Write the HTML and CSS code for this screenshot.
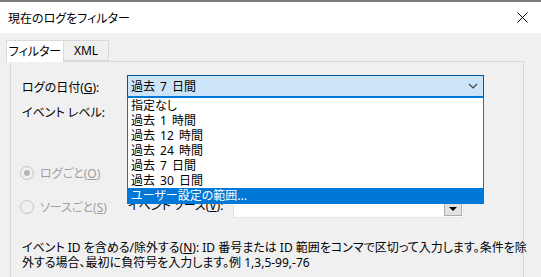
FILE: index.html
```html
<!DOCTYPE html>
<html lang="ja">
<head>
  <meta charset="UTF-8">
  <title>現在のログをフィルター</title>
  <link rel="stylesheet" href="styles.css">
</head>
<body>
  <div class="window">
    <div class="titlebar">
      <span class="title">現在のログをフィルター</span>
      <svg class="close" width="11" height="11" viewBox="0 0 11 11">
        <path d="M0.5 0.5 L10.5 10.5 M10.5 0.5 L0.5 10.5" stroke="#000" stroke-width="1" fill="none"/>
      </svg>
    </div>

    <div class="dialog">
      <div class="tabs">
        <div class="tab active">フィルター</div>
        <div class="tab">XML</div>
      </div>

      <div class="panel">
        <div class="row">
          <span class="label">ログの日付(<u>G</u>):</span>
          <div class="combo-wrap">
            <div class="combo open">
              <span>過去 7 日間</span>
              <svg width="10" height="6" viewBox="0 0 10 6">
                <path d="M1 1 L5 5 L9 1" stroke="#444" stroke-width="1.2" fill="none"/>
              </svg>
            </div>
            <ul class="dropdown">
              <li>指定なし</li>
              <li>過去 1 時間</li>
              <li>過去 12 時間</li>
              <li>過去 24 時間</li>
              <li>過去 7 日間</li>
              <li>過去 30 日間</li>
              <li class="selected">ユーザー設定の範囲...</li>
            </ul>
          </div>
        </div>

        <div class="row level">
          <span class="label">イベント レベル:</span>
        </div>

        <div class="radio-row first">
          <span class="radio checked"></span>
          <span class="disabled">ログごと(<u>O</u>)</span>
        </div>

        <div class="radio-row source">
          <span class="radio"></span>
          <span class="disabled radio-text">ソースごと(<u>S</u>)</span>
          <span class="source-label">イベント ソース(<u>V</u>):</span>
          <div class="source-combo">
            <span class="arrow-btn"><span class="tri"></span></span>
          </div>
        </div>

        <p class="hint">イベント ID を含める/除外する(<u>N</u>): ID 番号または ID 範囲をコンマで区切って入力します。条件を除<br>外する場合、最初に負符号を入力します。例 1,3,5-99,-76</p>
      </div>
    </div>
  </div>
</body>
</html>
```

FILE: styles.css
```css
body {
  margin: 0;
  width: 541px;
  height: 277px;
  overflow: hidden;
  background: #f0f0f0;
  font-family: "Noto Sans", "Noto Sans CJK JP", sans-serif;
  font-size: 12px;
  font-feature-settings: "palt" 1;
  color: #000;
}
u { text-decoration: underline; text-underline-offset: 1px; }

.window {
  border-top: 2px solid #7a7a7a;
}
.titlebar {
  height: 31px;
  background: #fff;
  display: flex;
  align-items: center;
  justify-content: space-between;
  padding: 0 13px 0 8px;
}
.close { display: block; }

.dialog {
  padding: 7px 0 0 6px;
}
.tabs {
  display: flex;
  align-items: flex-end;
  height: 22px;
  position: relative;
  z-index: 2;
}
.tab {
  height: 19px;
  line-height: 19px;
  width: 44px;
  border: 1px solid #d9d9d9;
  border-left: none;
  background: #f0f0f0;
  margin-bottom: 1px;
  text-align: center;
  white-space: nowrap;
}
.tab.active {
  height: 21px;
  line-height: 22px;
  width: 56px;
  border-left: 1px solid #d9d9d9;
  border-bottom: none;
  background: #fff;
  margin-bottom: 0;
}
.panel {
  margin: -1px 0 0 4px;
  width: 514px;
  height: 220px;
  border: 1px solid #d9d9d9;
  padding: 13px 0 0 11px;
  box-sizing: border-box;
}

.row {
  display: flex;
  align-items: center;
}
.label { width: 105px; white-space: nowrap; }

.combo-wrap {
  position: relative;
  width: 357px;
  word-spacing: 2px;
}
.combo {
  height: 23px;
  box-sizing: border-box;
  display: flex;
  align-items: center;
  justify-content: space-between;
  padding: 0 5px 0 3px;
  border: 1px solid #005499;
  border-bottom: 2px solid #0078d7;
  background: #cce4f7;
}
.dropdown {
  position: absolute;
  top: 23px;
  left: 0;
  right: 0;
  margin: 0;
  padding: 0;
  list-style: none;
  background: #fff;
  border: 1px solid #0078d7;
  border-top: none;
  z-index: 5;
}
.dropdown li {
  height: 15px;
  line-height: 15px;
  padding-left: 3px;
}
.dropdown li.selected {
  background: #0078d7;
  color: #fff;
}

.level {
  margin-top: 6px;
  height: 16px;
}

.radio-row {
  display: flex;
  align-items: center;
  margin-left: -2px;
}
.radio-row.first {
  margin-top: 45px;
  height: 16px;
}
.radio-row.source {
  margin-top: 14px;
  height: 23px;
}
.radio {
  width: 12px;
  height: 12px;
  border: 1px solid #c4c4c4;
  border-radius: 50%;
  background: #f0f0f0;
  margin-right: 6px;
  position: relative;
}
.radio.checked::after {
  content: "";
  position: absolute;
  left: 3px;
  top: 3px;
  width: 6px;
  height: 6px;
  border-radius: 50%;
  background: #b4b4b4;
}
.disabled { color: #a0a0a0; }
.radio-text { width: 88px; }
.source-label { width: 105px; margin-top: -4px; white-space: nowrap; }
.source-combo {
  width: 231px;
  height: 23px;
  box-sizing: border-box;
  border: 1px solid #e3e3e3;
  background: #fff;
  display: flex;
  justify-content: flex-end;
  align-items: center;
  padding-right: 1px;
}
.arrow-btn {
  width: 18px;
  height: 15px;
  margin-top: 4px;
  box-sizing: border-box;
  border: 1px solid #adadad;
  background: #e1e1e1;
  display: flex;
  align-items: center;
  justify-content: center;
}
.tri {
  width: 0;
  height: 0;
  border-left: 4px solid transparent;
  border-right: 4px solid transparent;
  border-top: 4px solid #000;
}

.hint {
  margin: 22px 0 0;
  line-height: 15px;
  white-space: nowrap;
}
```
